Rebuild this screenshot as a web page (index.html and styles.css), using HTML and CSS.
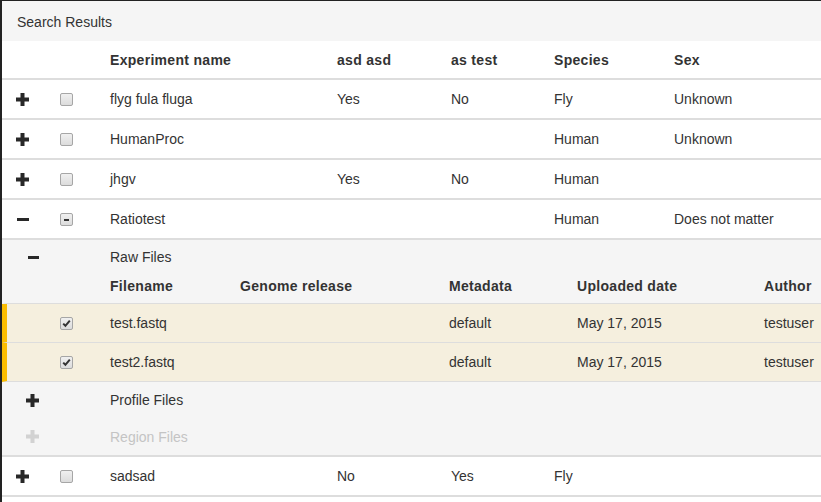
FILE: index.html
```html
<!DOCTYPE html>
<html lang="en">
<head>
<meta charset="utf-8">
<title>Search Results</title>
<link rel="stylesheet" href="styles.css">
</head>
<body>
<div class="panel">
  <div class="panel-heading">Search Results</div>
  <div class="results">
    <div class="row head">
      <span></span><span></span>
      <span>Experiment name</span><span>asd asd</span><span>as test</span><span>Species</span><span>Sex</span>
    </div>
    <div class="row">
      <span class="tog"><svg class="ico" width="13" height="13" viewBox="0 0 13 13"><rect x="0" y="4.5" width="13" height="4"/><rect x="4.5" y="0" width="4" height="13"/></svg></span>
      <span><span class="cb"></span></span>
      <span>flyg fula fluga</span><span>Yes</span><span>No</span><span>Fly</span><span>Unknown</span>
    </div>
    <div class="row">
      <span class="tog"><svg class="ico" width="13" height="13" viewBox="0 0 13 13"><rect x="0" y="4.5" width="13" height="4"/><rect x="4.5" y="0" width="4" height="13"/></svg></span>
      <span><span class="cb"></span></span>
      <span>HumanProc</span><span></span><span></span><span>Human</span><span>Unknown</span>
    </div>
    <div class="row">
      <span class="tog"><svg class="ico" width="13" height="13" viewBox="0 0 13 13"><rect x="0" y="4.5" width="13" height="4"/><rect x="4.5" y="0" width="4" height="13"/></svg></span>
      <span><span class="cb"></span></span>
      <span>jhgv</span><span>Yes</span><span>No</span><span>Human</span><span></span>
    </div>
    <div class="row">
      <span class="tog"><svg class="ico" width="13" height="13" viewBox="0 0 13 13"><rect x="1" y="5" width="12" height="3"/></svg></span>
      <span><span class="cb"><svg width="11" height="11" viewBox="0 0 11 11"><rect x="3" y="5" width="5" height="2" fill="#333"/></svg></span></span>
      <span>Ratiotest</span><span></span><span></span><span>Human</span><span>Does not matter</span>
    </div>
    <div class="details">
      <div class="group raw">
        <span class="tog"><svg class="ico" width="13" height="13" viewBox="0 0 13 13"><rect x="2" y="5" width="11" height="3"/></svg></span>
        <span>Raw Files</span>
      </div>
      <div class="file fhead">
        <span></span><span></span>
        <span>Filename</span><span>Genome release</span><span>Metadata</span><span>Uploaded date</span><span>Author</span>
      </div>
      <div class="file sel">
        <span></span>
        <span><span class="cb"><svg width="11" height="11" viewBox="0 0 11 11"><path d="M2.2 5.6 L4.4 7.8 L8.8 2.6" fill="none" stroke="#333" stroke-width="2"/></svg></span></span>
        <span>test.fastq</span><span></span><span>default</span><span>May 17, 2015</span><span>testuser</span>
      </div>
      <div class="file sel">
        <span></span>
        <span><span class="cb"><svg width="11" height="11" viewBox="0 0 11 11"><path d="M2.2 5.6 L4.4 7.8 L8.8 2.6" fill="none" stroke="#333" stroke-width="2"/></svg></span></span>
        <span>test2.fastq</span><span></span><span>default</span><span>May 17, 2015</span><span>testuser</span>
      </div>
      <div class="group profile">
        <span class="tog"><svg class="ico" width="13" height="13" viewBox="0 0 13 13"><rect x="0" y="4.5" width="13" height="4"/><rect x="4.5" y="0" width="4" height="13"/></svg></span>
        <span>Profile Files</span>
      </div>
      <div class="group region disabled">
        <span class="tog"><svg class="ico" width="13" height="13" viewBox="0 0 13 13"><rect x="0" y="4.5" width="13" height="4"/><rect x="4.5" y="0" width="4" height="13"/></svg></span>
        <span>Region Files</span>
      </div>
    </div>
    <div class="row">
      <span class="tog"><svg class="ico" width="13" height="13" viewBox="0 0 13 13"><rect x="0" y="4.5" width="13" height="4"/><rect x="4.5" y="0" width="4" height="13"/></svg></span>
      <span><span class="cb"></span></span>
      <span>sadsad</span><span>No</span><span>Yes</span><span>Fly</span><span></span>
    </div>
  </div>
</div>
</body>
</html>
```

FILE: styles.css
```css
html, body {
  margin: 0;
  padding: 0;
}

body {
  background: #fff;
  font-family: "Liberation Sans", Arial, sans-serif;
  font-size: 14px;
  color: #333;
  height: 502px;
  overflow: hidden;
  box-sizing: border-box;
  border-top: 1px solid #222;
  border-left: 2px solid #222;
}

.panel-heading {
  height: 38px;
  line-height: 38px;
  padding-top: 2px;
  padding-left: 15px;
  background: #f5f5f5;
  white-space: nowrap;
}

.row {
  display: grid;
  grid-template-columns: 44px 50px 227px 114px 103px 120px 1fr;
  align-items: center;
  padding-left: 14px;
  height: 38px;
  border-bottom: 2px solid #ddd;
  white-space: nowrap;
}

.row.head {
  height: 37px;
  font-weight: bold;
  letter-spacing: 0.3px;
}

.tog {
  display: flex;
  align-items: center;
}

.ico {
  display: block;
  fill: #282828;
}

.cb {
  display: flex;
  align-items: center;
  justify-content: center;
  width: 11px;
  height: 11px;
  border: 1px solid #a6a6a6;
  border-radius: 2px;
  background: linear-gradient(#f0f0f0, #dcdcdc);
}

.cb svg {
  display: block;
}

.details {
  background: #f5f5f5;
  border-bottom: 2px solid #ddd;
}

.group {
  display: grid;
  grid-template-columns: 84px 1fr;
  align-items: center;
  padding-left: 24px;
  white-space: nowrap;
}

.group.raw {
  height: 34px;
}

.group.profile {
  height: 36px;
}

.group.region {
  height: 37px;
}

.group.disabled {
  color: #c4c4c4;
}

.group.disabled .ico {
  fill: #d2d2d2;
}

.file {
  display: grid;
  grid-template-columns: 53px 50px 130px 209px 128px 187px 1fr;
  align-items: center;
  border-left: 5px solid transparent;
  white-space: nowrap;
  border-bottom: 1px solid #ddd;
}

.file.fhead {
  height: 23px;
  padding-bottom: 6px;
  font-weight: bold;
  letter-spacing: 0.3px;
}

.file.sel {
  height: 38px;
  background: #f5efde;
  border-left-color: #fbbd00;
}
```
